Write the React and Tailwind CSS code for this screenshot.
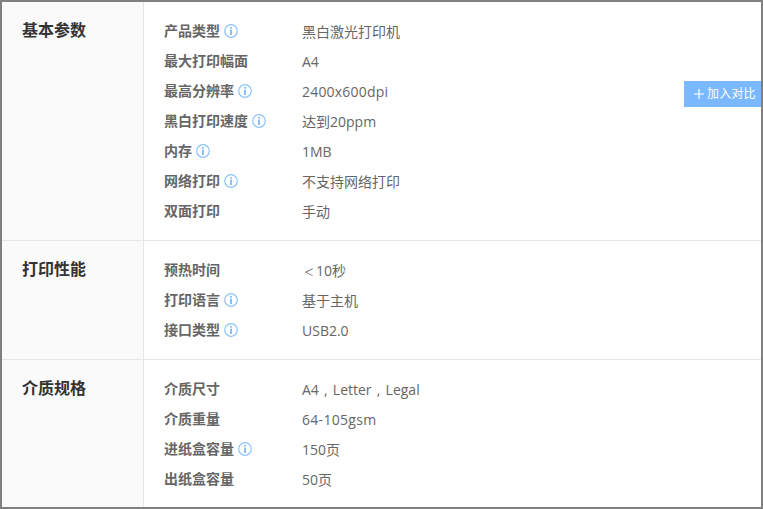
import React from 'react';

const Comma = () => <span className="inline-block w-[14px] text-center">,</span>;

const SECTIONS = [
  {
    title: '基本参数',
    rows: [
      { label: '产品类型', value: '黑白激光打印机', info: true },
      { label: '最大打印幅面', value: 'A4' },
      { label: '最高分辨率', value: <span className="tracking-[0.2px]">2400x600dpi</span>, info: true },
      { label: '黑白打印速度', value: '达到20ppm', info: true },
      { label: '内存', value: '1MB', info: true },
      { label: '网络打印', value: '不支持网络打印', info: true },
      { label: '双面打印', value: '手动' },
    ],
  },
  {
    title: '打印性能',
    rows: [
      {
        label: '预热时间',
        value: (
          <>
            <span className="inline-block w-[14px] text-center text-[10px]">＜</span>10秒
          </>
        ),
      },
      { label: '打印语言', value: '基于主机', info: true },
      { label: '接口类型', value: 'USB2.0', info: true },
    ],
  },
  {
    title: '介质规格',
    last: true,
    rows: [
      {
        label: '介质尺寸',
        value: (
          <>
            A4<Comma />Letter<Comma />Legal
          </>
        ),
      },
      { label: '介质重量', value: <span className="tracking-[0.3px]">64-105gsm</span> },
      { label: '进纸盒容量', value: '150页', info: true },
      { label: '出纸盒容量', value: '50页' },
    ],
  },
];

const InfoIcon = () => (
  <svg width="14" height="14" viewBox="0 0 14 14" className="ml-[4px] shrink-0" fill="none">
    <circle cx="7" cy="7" r="6.3" stroke="#8cc4fb" strokeWidth="1.2" />
    <rect x="6.2" y="3" width="1.6" height="1.6" fill="#6db1f7" />
    <rect x="6.2" y="5.6" width="1.6" height="5.4" fill="#6db1f7" />
  </svg>
);

const Row = ({ label, value, info }) => (
  <div className="flex h-[30px] items-center">
    <div className="flex h-[20px] w-[138px] items-center text-[14px] leading-[20px] font-bold text-[#666]">
      {label}
      {info && <InfoIcon />}
    </div>
    <div className="text-[14px] text-[#666]">{value}</div>
  </div>
);

const Section = ({ title, rows, last }) => (
  <div className={last ? 'flex flex-1' : 'flex border-b border-[#e6e6e6]'}>
    <div className="w-[142px] shrink-0 border-r border-[#e6e6e6] bg-[#fafafa] pl-5 pt-[13px] text-[16px] leading-[30px] font-bold text-[#333]">
      {title}
    </div>
    <div className="flex-1 pl-5 pt-[14px] pb-[14px]">
      {rows.map((row) => (
        <Row key={row.label} {...row} />
      ))}
    </div>
  </div>
);

export default function App() {
  return (
    <div
      className="relative flex h-[509px] w-[763px] flex-col overflow-hidden border-2 border-[#808080] bg-white"
      style={{ fontFamily: '"Open Sans", "Noto Sans CJK SC", sans-serif' }}
    >
      {SECTIONS.map((section) => (
        <Section key={section.title} {...section} />
      ))}
      <button
        type="button"
        className="absolute top-[79px] right-0 flex h-[26px] w-[77px] items-center gap-[3px] bg-[#7ab8ff] pl-[10px] text-[12px] tracking-[0.2px] text-white"
      >
        <svg width="10" height="10" viewBox="0 0 10 10" fill="none">
          <path d="M5 0v10M0 5h10" stroke="#fff" strokeWidth="1.2" />
        </svg>
        加入对比
      </button>
    </div>
  );
}
